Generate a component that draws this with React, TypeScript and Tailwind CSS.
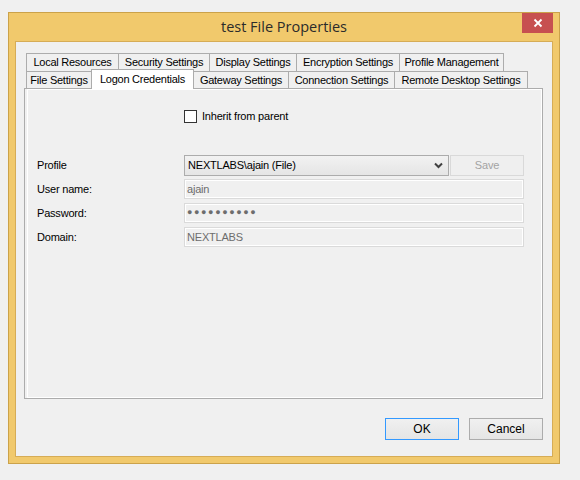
import React from "react";

const font = { fontFamily: '"Liberation Sans", Arial, sans-serif' };

function Tab({ label, w, selected }: { label: string; w: number; selected?: boolean }) {
  if (selected) {
    return (
      <div
        className="relative z-10 -mt-[2px] h-[20px] -ml-px flex items-start justify-center pt-[1px] border border-b-0 border-[#acacac] bg-white text-[11px] tracking-[-0.25px] text-black whitespace-nowrap"
        style={{ width: w }}
      >
        {label}
      </div>
    );
  }
  return (
    <div
      className="h-full -ml-px first:ml-0 flex items-center justify-center border border-b-0 border-[#acacac] bg-[#f0f0f0] text-[11px] tracking-[-0.25px] text-black whitespace-nowrap"
      style={{ width: w }}
    >
      {label}
    </div>
  );
}

export default function App() {
  return (
    <div className="w-[580px] h-[480px] bg-[#f0f0f0] pt-[12px] pl-[8px]" style={font}>
      <div className="w-[552px] h-[452px] border border-[#cba24a] bg-[#f1c96c] flex flex-col">
        {/* title bar */}
        <div className="relative h-[28px] flex items-center justify-center">
          <span
            className="text-[14.5px] text-[#2b2b2b] -mt-[1px]"
            style={{ fontFamily: '"Open Sans", "Noto Sans", sans-serif' }}
          >
            test File Properties
          </span>
          <div className="absolute right-[6px] top-0 w-[31px] h-[20px] bg-[#c75050] flex items-center justify-center">
            <svg width="10" height="10" viewBox="0 0 10 10">
              <path d="M1.5 1.5 L8.5 8.5 M8.5 1.5 L1.5 8.5" stroke="white" strokeWidth="1.8" />
            </svg>
          </div>
        </div>
        {/* client */}
        <div className="mx-[6px] mb-[6px] flex-1 border border-[#d6ac56] bg-[#f0f0f0] flex flex-col pt-[11px] pl-[8px] pr-[9px]">
          {/* tabs */}
          <div className="flex flex-col">
            <div className="flex h-[18px] pl-[2px]">
              <Tab label="Local Resources" w={93} />
              <Tab label="Security Settings" w={92} />
              <Tab label="Display Settings" w={88} />
              <Tab label="Encryption Settings" w={104} />
              <Tab label="Profile Management" w={105} />
            </div>
            <div className="flex h-[17px] pl-[2px] items-start">
              <Tab label="File Settings" w={66} />
              <Tab label="Logon Credentials" w={103} selected />
              <Tab label="Gateway Settings" w={96} />
              <Tab label="Connection Settings" w={107} />
              <Tab label="Remote Desktop Settings" w={134} />
            </div>
          </div>
          {/* panel */}
          <div className="w-[519px] h-[311px] border border-[#acacac] bg-[#f0f0f0]">
            <div className="ml-[2px] h-full border border-white pl-[9px] pt-[20px]">
              <div className="grid grid-cols-[147px_340px] text-[11px] tracking-[-0.2px] text-black">
                <div />
                <div className="flex items-center h-[13px]">
                  <div className="w-[13px] h-[13px] border border-[#333333] bg-white" />
                  <span className="ml-[5px]">Inherit from parent</span>
                </div>

                <div className="mt-[32px] h-[21px] flex items-center">Profile</div>
                <div className="mt-[32px] h-[21px] flex">
                  <div className="w-[265px] h-[21px] border border-[#acacac] bg-gradient-to-b from-[#f2f2f2] to-[#e5e5e5] flex items-center justify-between pl-[3px] pr-[5px]">
                    <span>NEXTLABS\ajain (File)</span>
                    <svg width="9" height="7" viewBox="0 0 9 7">
                      <path d="M1 1.5 L4.5 5 L8 1.5" stroke="#404040" strokeWidth="2" fill="none" />
                    </svg>
                  </div>
                  <div className="ml-[1px] w-[74px] h-[21px] border border-[#d9d9d9] bg-[#efefef] flex items-center justify-center text-[#a3a3a3]">
                    Save
                  </div>
                </div>

                <div className="mt-[3px] h-[20px] flex items-center">User name:</div>
                <div className="mt-[3px] h-[20px] border border-[#dadada] bg-[#f0f0f0]">
                  <div className="h-full border border-white flex items-center pl-[1px] text-[#6d6d6d]">ajain</div>
                </div>

                <div className="mt-[4px] h-[20px] flex items-center">Password:</div>
                <div className="mt-[4px] h-[20px] border border-[#dadada] bg-[#f0f0f0]">
                  <div className="h-full border border-white flex items-center pl-[1px] text-[#6d6d6d] text-[9px] tracking-[1.6px]">
                    ●●●●●●●●●●
                  </div>
                </div>

                <div className="mt-[4px] h-[20px] flex items-center">Domain:</div>
                <div className="mt-[4px] h-[20px] border border-[#dadada] bg-[#f0f0f0]">
                  <div className="h-full border border-white flex items-center pl-[1px] text-[#6d6d6d]">NEXTLABS</div>
                </div>
              </div>
            </div>
          </div>
          {/* buttons */}
          <div className="mt-[19px] flex justify-end gap-[10px] w-[519px] text-[12px] text-black">
            <div className="w-[74px] h-[22px] border border-[#3399ff] bg-gradient-to-b from-[#f0f0f0] to-[#e5e5e5] flex items-center justify-center">
              OK
            </div>
            <div className="w-[74px] h-[22px] border border-[#acacac] bg-gradient-to-b from-[#f0f0f0] to-[#e5e5e5] flex items-center justify-center">
              Cancel
            </div>
          </div>
        </div>
      </div>
    </div>
  );
}
